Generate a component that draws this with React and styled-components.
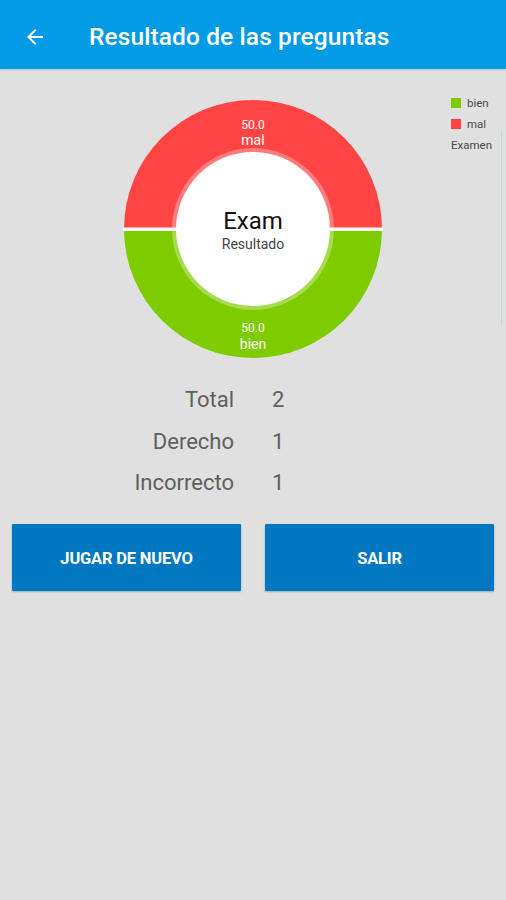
import React from "react";
import styled, { createGlobalStyle } from "styled-components";

const Global = createGlobalStyle`
  html, body { margin: 0; padding: 0; background: #e0e0e0; }
  body { font-family: Roboto, "Noto Sans", Arial, sans-serif; }
  #root { min-height: 900px; background: #e0e0e0; }
`;

const Page = styled.div`
  width: 506px;
  min-height: 900px;
  display: flex;
  flex-direction: column;
  background: #e0e0e0;
`;

const AppBar = styled.header`
  height: 69px;
  background: #039be5;
  display: flex;
  align-items: center;
  padding-left: 23px;
  box-sizing: border-box;
  box-shadow: 0 1px 2px rgba(0, 0, 0, 0.15);
`;

const BackButton = styled.div`
  width: 24px;
  height: 24px;
  display: flex;
  align-items: center;
  justify-content: center;
  margin-right: 42px;
  margin-top: 4px;
`;

const Title = styled.h1`
  margin: 0;
  margin-top: 3px;
  color: #fff;
  font-size: 24.5px;
  font-weight: 500;
  letter-spacing: 0.1px;
`;

const ChartArea = styled.section`
  position: relative;
  display: flex;
  justify-content: center;
  padding-top: 31px;
`;

const Legend = styled.div`
  position: absolute;
  top: 96px;
  left: 451px;
  display: flex;
  flex-direction: column;
  gap: 7px;
  font-size: 11.5px;
  color: #4a4a4a;
`;

const LegendItem = styled.div`
  display: flex;
  align-items: center;
  gap: 6px;
  height: 14px;
`;

const Swatch = styled.span`
  width: 10px;
  height: 10px;
  background: ${(p) => p.color};
`;

const EdgeGlow = styled.div`
  position: absolute;
  top: 130px;
  right: 4px;
  width: 1px;
  height: 196px;
  background: #b9dcdc;
`;

const Stats = styled.div`
  display: grid;
  grid-template-columns: 234px 1fr;
  margin-top: 19px;
  color: #5f5f5f;
  font-size: 22px;
  line-height: 41.5px;
`;

const StatLabel = styled.div`
  text-align: right;
`;

const StatValue = styled.div`
  padding-left: 38px;
`;

const Buttons = styled.div`
  display: flex;
  gap: 24px;
  padding: 0 12px;
  margin-top: 20px;
`;

const ActionButton = styled.button`
  flex: 1;
  height: 67px;
  border: none;
  border-radius: 1px;
  background: #0277c2;
  color: #fff;
  font-family: Roboto, Arial, sans-serif;
  font-size: 16.5px;
  font-weight: 700;
  letter-spacing: -0.2px;
  box-shadow: 0 1px 2px rgba(0, 0, 0, 0.25);
  padding: 3px 0 0;
`;

const Donut = () => {
  const cx = 130;
  const cy = 129;
  const R = 129;
  return (
    <svg width="260" height="260" viewBox="0 0 260 260">
      <path
        d={`M ${cx - R} ${cy} A ${R} ${R} 0 0 1 ${cx + R} ${cy} Z`}
        fill="#ff4444"
      />
      <path
        d={`M ${cx - R} ${cy} A ${R} ${R} 0 0 0 ${cx + R} ${cy} Z`}
        fill="#7ecc00"
      />
      <rect x="0" y={cy - 1.5} width="260" height="3.5" fill="#ffffff" />
      <circle cx={cx} cy={cy} r="81" fill="rgba(255,255,255,0.3)" />
      <circle cx={cx} cy={cy} r="77" fill="#ffffff" />
      <g fontFamily="Roboto, Arial, sans-serif" fill="#ffffff" textAnchor="middle">
        <text x={cx} y="29" fontSize="12">50.0</text>
        <text x={cx} y="45" fontSize="14">mal</text>
        <text x={cx} y="232" fontSize="12">50.0</text>
        <text x={cx} y="249" fontSize="14">bien</text>
      </g>
      <g fontFamily="Roboto, Arial, sans-serif" textAnchor="middle">
        <text x={cx} y="129" fontSize="24" fill="#111">Exam</text>
        <text x={cx} y="149" fontSize="14" fill="#444">Resultado</text>
      </g>
    </svg>
  );
};

const stats = [
  ["Total", 2],
  ["Derecho", 1],
  ["Incorrecto", 1],
];

export default function App() {
  return (
    <Page>
      <Global />
      <AppBar>
        <BackButton>
          <svg width="24" height="24" viewBox="0 0 24 24">
            <path
              d="M20 11H7.83l5.59-5.59L12 4l-8 8 8 8 1.41-1.41L7.83 13H20v-2z"
              fill="#fff"
            />
          </svg>
        </BackButton>
        <Title>Resultado de las preguntas</Title>
      </AppBar>
      <ChartArea>
        <Donut />
      </ChartArea>
      <Legend>
        <LegendItem>
          <Swatch color="#7ecc00" />
          bien
        </LegendItem>
        <LegendItem>
          <Swatch color="#ff4444" />
          mal
        </LegendItem>
        <LegendItem>Examen</LegendItem>
      </Legend>
      <EdgeGlow />
      <Stats>
        {stats.map(([l, v]) => (
          <React.Fragment key={l}>
            <StatLabel>{l}</StatLabel>
            <StatValue>{v}</StatValue>
          </React.Fragment>
        ))}
      </Stats>
      <Buttons>
        <ActionButton>JUGAR DE NUEVO</ActionButton>
        <ActionButton>SALIR</ActionButton>
      </Buttons>
    </Page>
  );
}
